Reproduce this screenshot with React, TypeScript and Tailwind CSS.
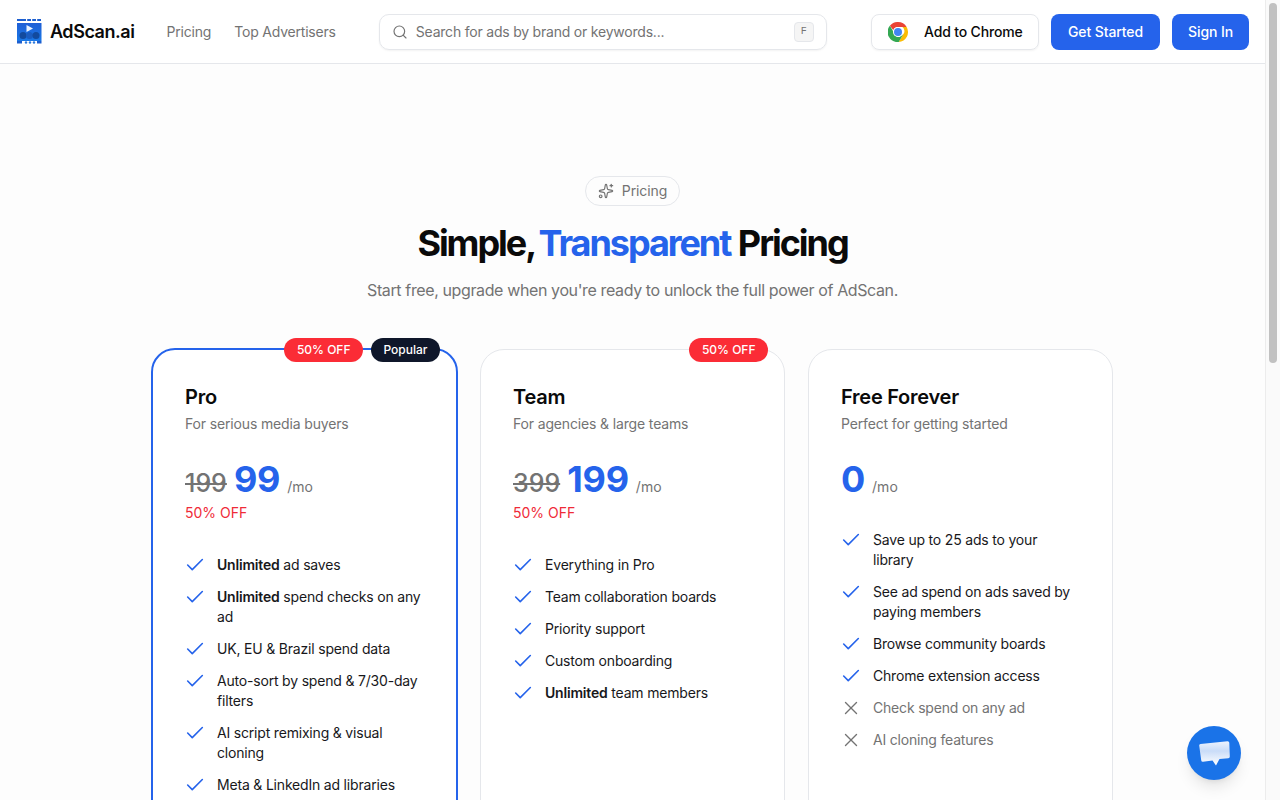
import { Check, Search, Sparkles, X } from 'lucide-react';
import type { ReactNode } from 'react';

type Feature = { text: ReactNode; off?: boolean };

const B = ({ children }: { children: ReactNode }) => (
  <span className="font-semibold">{children}</span>
);

const proFeatures: Feature[] = [
  { text: <><B>Unlimited</B> ad saves</> },
  { text: <><B>Unlimited</B> spend checks on any ad</> },
  { text: 'UK, EU & Brazil spend data' },
  { text: 'Auto-sort by spend & 7/30-day filters' },
  { text: 'AI script remixing & visual cloning' },
  { text: 'Meta & LinkedIn ad libraries' },
];

const teamFeatures: Feature[] = [
  { text: 'Everything in Pro' },
  { text: 'Team collaboration boards' },
  { text: 'Priority support' },
  { text: 'Custom onboarding' },
  { text: <><B>Unlimited</B> team members</> },
];

const freeFeatures: Feature[] = [
  { text: 'Save up to 25 ads to your library' },
  { text: 'See ad spend on ads saved by paying members' },
  { text: 'Browse community boards' },
  { text: 'Chrome extension access' },
  { text: 'Check spend on any ad', off: true },
  { text: 'AI cloning features', off: true },
];

function Logo() {
  return (
    <svg width="25" height="26" viewBox="0 0 25 26" className="shrink-0 ml-px">
      <defs>
        <linearGradient id="logoBody" x1="0" y1="0" x2="0" y2="1">
          <stop offset="0" stopColor="#1f5fd6" />
          <stop offset="1" stopColor="#1a78e6" />
        </linearGradient>
      </defs>
      <rect x="0" y="0" width="24" height="2" fill="#1d5fd0" />
      <rect x="9" y="0" width="1.2" height="2" fill="#fff" />
      <rect x="14" y="0" width="1.2" height="2" fill="#fff" />
      <rect x="19" y="0" width="1.2" height="2" fill="#fff" />
      <rect x="0" y="4" width="24.5" height="18" fill="url(#logoBody)" />
      <path d="M9.5 6 L16 9.5 L9.5 13 Z" fill="#e8f2ff" />
      <circle cx="6" cy="16.5" r="3.5" fill="#124a9e" />
      <circle cx="12.5" cy="16.5" r="3.5" fill="#1a5cc0" />
      <circle cx="19" cy="16.5" r="3.5" fill="#124a9e" />
      <rect x="0" y="22" width="5" height="2.5" fill="#1d5fd0" />
      <rect x="20" y="22" width="4.5" height="2.5" fill="#1d5fd0" />
      <circle cx="9" cy="23.5" r="1.2" fill="#2b79dd" />
      <circle cx="13" cy="23.5" r="1.2" fill="#2b79dd" />
      <circle cx="17" cy="23.5" r="1.2" fill="#2b79dd" />
    </svg>
  );
}

function ChromeIcon() {
  return (
    <svg width="20" height="20" viewBox="4 4 40 40" className="shrink-0">
      <path d="M24 4a20 20 0 0 1 17.3 10H24a10 10 0 0 0-9.4 6.6L7.8 11.4A20 20 0 0 1 24 4z" fill="#ea4335" />
      <path d="M41.3 14A20 20 0 0 1 25.5 44l8.9-15.3A10 10 0 0 0 32.7 14z" fill="#fbbc05" />
      <path d="M25.5 44A20 20 0 0 1 7.8 11.4l8.5 14.8a10 10 0 0 0 10.9 7.7L34.4 28.7z" fill="#34a853" />
      <circle cx="24" cy="24" r="10" fill="#fff" />
      <circle cx="24" cy="24" r="8" fill="#4285f4" />
    </svg>
  );
}

function ChatIcon() {
  return (
    <svg width="31" height="25" viewBox="0 0 31 25">
      <defs>
        <linearGradient id="bubble" x1="0" y1="0" x2="0" y2="1">
          <stop offset="0" stopColor="#eef4fe" />
          <stop offset="0.4" stopColor="#c9dcf8" />
          <stop offset="1" stopColor="#ffffff" />
        </linearGradient>
      </defs>
      <path
        d="M1.5 3 L28.5 0.2 Q30.2 0.1 30.3 1.8 L30.8 15.5 Q30.8 17 29.3 17.2 L20.5 18 L17 24.5 L13.5 19.6 L4 20.8 Q2.4 20.9 2.2 19.3 L0.2 4.5 Q0.1 3.2 1.5 3 Z"
        fill="url(#bubble)"
      />
    </svg>
  );
}

function Item({ text, off }: Feature) {
  return (
    <li className="flex gap-3">
      {off ? (
        <X className="w-[22px] h-[22px] -mx-px -my-px shrink-0 text-[#737373]" strokeWidth={1.5} />
      ) : (
        <Check className="w-[22px] h-[22px] -mx-px -my-px shrink-0 text-[#2563eb]" strokeWidth={1.75} />
      )}
      <span className={`text-sm leading-5 tracking-[-0.19px] ${off ? 'text-[#737373]' : 'text-[#18181b]'}`}>
        {text}
      </span>
    </li>
  );
}

function Badge({ children, dark }: { children: ReactNode; dark?: boolean }) {
  return (
    <span
      className={`h-6 px-[12.5px] flex items-center rounded-full text-xs font-medium text-white ${
        dark ? 'bg-[#0f172a]' : 'bg-[#fb2c36]'
      }`}
    >
      {children}
    </span>
  );
}

interface PlanProps {
  name: string;
  tagline: string;
  oldPrice?: string;
  price: string;
  features: Feature[];
  badges?: ReactNode;
  featured?: boolean;
}

function Plan({ name, tagline, oldPrice, price, features, badges, featured }: PlanProps) {
  return (
    <div
      className={`relative h-[560px] rounded-3xl bg-white px-8 pt-[33px] ${
        featured ? 'border-2 border-[#2563eb] -mx-px -mt-px' : 'border border-[#e5e7eb]'
      }`}
    >
      {badges && <div className="absolute -top-3 right-4 flex gap-2">{badges}</div>}
      <h3 className="text-xl leading-7 font-semibold tracking-[-0.25px] text-[#0a0a0a]">{name}</h3>
      <p className="mt-[3px] text-sm leading-5 tracking-[-0.15px] text-[#737373]">{tagline}</p>
      <div className="mt-[25px] flex items-baseline h-10">
        {oldPrice && (
          <span className="mr-[7px] text-[25px] font-medium text-[#737373] line-through">{oldPrice}</span>
        )}
        <span className="text-4xl font-bold tracking-[-0.2px] text-[#2563eb]">{price}</span>
        <span className="ml-[7px] text-sm text-[#737373]">/mo</span>
      </div>
      {oldPrice && <p className="mt-1 text-sm leading-5 text-[#ef2b38]">50% OFF</p>}
      <ul className={`flex flex-col gap-3 ${oldPrice ? 'mt-8' : 'mt-[31px]'}`}>
        {features.map((f, i) => (
          <Item key={i} {...f} />
        ))}
      </ul>
    </div>
  );
}

export default function App() {
  return (
    <div
      className="h-screen flex overflow-hidden bg-white"
      style={{ fontFamily: 'Inter, "Noto Sans", sans-serif' }}
    >
      <div className="flex-1 min-w-0">
        <header className="h-16 flex items-center bg-white border-b border-[#e5e7eb] px-4">
          <Logo />
          <span className="ml-2 text-lg font-semibold tracking-tight text-[#0a0a0a]">AdScan.ai</span>
          <nav className="ml-8 flex gap-[23px] text-sm tracking-[-0.2px] text-[#737373]">
            <span>Pricing</span>
            <span>Top Advertisers</span>
          </nav>
          <div className="ml-[43px] w-[448px] h-9 flex items-center rounded-[10px] border border-[#e5e7eb] px-3 shadow-xs">
            <Search className="w-4 h-4 text-[#737373]" strokeWidth={1.75} />
            <span className="ml-2 flex-1 text-sm tracking-[-0.21px] text-[#737373]">
              Search for ads by brand or keywords...
            </span>
            <kbd className="w-5 h-5 flex items-center justify-center rounded bg-[#f5f5f5] border border-[#e5e7eb] text-[10px] text-[#737373] font-medium">
              F
            </kbd>
          </div>
          <div className="ml-auto flex gap-3">
            <div className="h-9 w-[168px] flex items-center rounded-lg border border-[#e5e7eb] pl-4 shadow-xs text-sm font-medium tracking-[-0.15px] text-[#0a0a0a]">
              <ChromeIcon />
              <span className="ml-4">Add to Chrome</span>
            </div>
            <div className="h-9 w-[109px] flex items-center justify-center rounded-lg bg-[#2563eb] text-sm font-medium tracking-[-0.1px] text-white">
              Get Started
            </div>
            <div className="h-9 w-[77px] flex items-center justify-center rounded-lg bg-[#2563eb] text-sm font-medium tracking-[-0.1px] text-white">
              Sign In
            </div>
          </div>
        </header>

        <main className="relative h-[736px] overflow-hidden bg-[#fdfdfd] pt-28">
          <div className="flex flex-col items-center">
            <div className="h-[30px] px-3 flex items-center gap-2 rounded-full border border-[#e5e7eb] text-sm tracking-[-0.1px] text-[#737373]">
              <Sparkles className="w-4 h-4" strokeWidth={1.75} />
              Pricing
            </div>
            <h1 className="mt-[17px] text-4xl leading-10 font-bold tracking-[-2.05px] text-[#0a0a0a]">
              Simple, <span className="-ml-[2px] mr-px text-[#2563eb]">Transparent</span> Pricing
            </h1>
            <p className="mt-[15px] text-base leading-6 tracking-[-0.38px] text-[#737373]">
              Start free, upgrade when you're ready to unlock the full power of AdScan.
            </p>
          </div>

          <div className="mt-[47px] mx-auto w-[961px] grid grid-cols-3 gap-[23px]">
            <Plan
              featured
              name="Pro"
              tagline="For serious media buyers"
              oldPrice="199"
              price="99"
              features={proFeatures}
              badges={
                <>
                  <Badge>50% OFF</Badge>
                  <Badge dark>Popular</Badge>
                </>
              }
            />
            <Plan
              name="Team"
              tagline="For agencies & large teams"
              oldPrice="399"
              price="199"
              features={teamFeatures}
              badges={<Badge>50% OFF</Badge>}
            />
            <Plan name="Free Forever" tagline="Perfect for getting started" price="0" features={freeFeatures} />
          </div>

          <div className="absolute right-6 bottom-5 w-[54px] h-[54px] flex items-center justify-center rounded-full bg-[#1a73e8] shadow-lg">
            <ChatIcon />
          </div>
        </main>
      </div>

      <div className="w-[15px] shrink-0 bg-[#fafafa] border-l border-[#ececec] pt-[3px] pl-[3px] pr-[3px]">
        <div className="h-[360px] rounded-full bg-[#c1c1c1]" />
      </div>
    </div>
  );
}
